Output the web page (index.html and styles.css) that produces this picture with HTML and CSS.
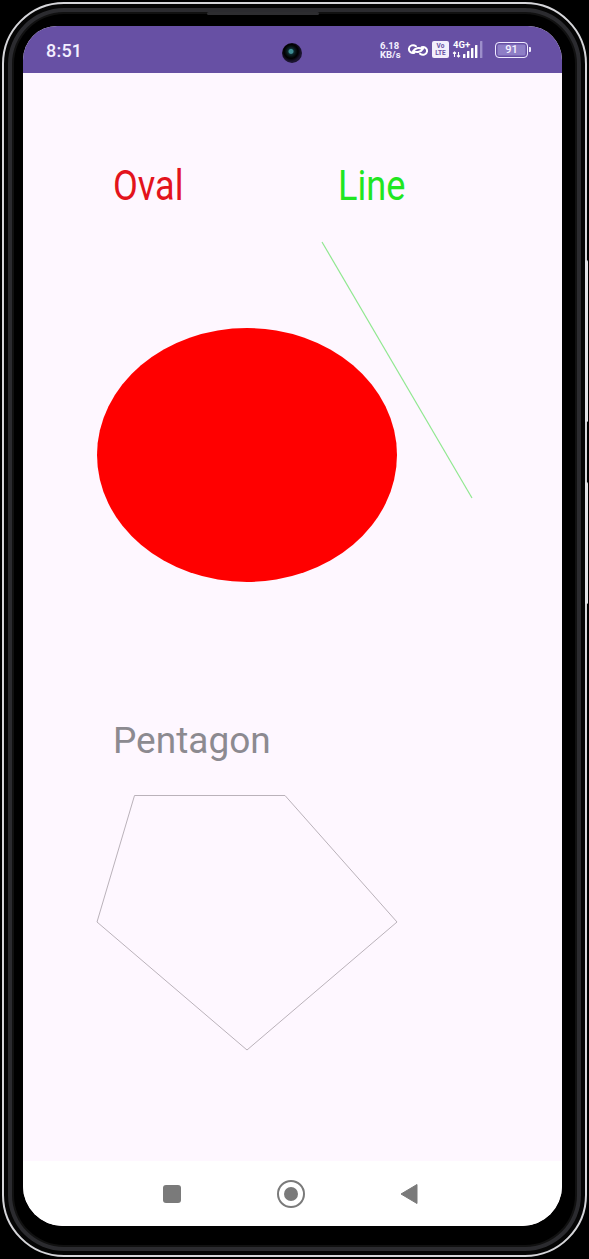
FILE: index.html
```html
<!DOCTYPE html>
<html>
<head>
<meta charset="utf-8">
<link rel="stylesheet" href="styles.css">
</head>
<body>
<div class="phone">
  <div class="bezel">
    <span class="side-btn btn-a"></span>
    <span class="side-btn btn-b"></span>
    <span class="speaker"></span>
    <div class="screen">
      <div class="status">
        <span class="time">8:51</span>
        <span class="camera"></span>
        <div class="icons">
          <div class="speed"><span>6.18</span><span>KB/s</span></div>
          <svg class="link" width="22" height="16" viewBox="0 0 22 16">
            <path d="M9 4.2 C6.5 2.3 2.4 3.2 1.9 6.6 C1.5 9.6 4.6 11.6 7.4 10.7" fill="none" stroke="#fff" stroke-width="2" stroke-linecap="round"/>
            <path d="M13 11.8 C15.5 13.7 19.6 12.8 20.1 9.4 C20.5 6.4 17.4 4.4 14.6 5.3" fill="none" stroke="#fff" stroke-width="2" stroke-linecap="round"/>
            <path d="M6 9.3 C8 6 12 5 15 7 M16 6.7 C14 10 10 11 7 9" fill="none" stroke="#fff" stroke-width="2" stroke-linecap="round"/>
          </svg>
          <div class="volte"><span>Vo</span><span>LTE</span></div>
          <svg class="signal" width="37" height="19" viewBox="0 0 37 19">
            <text x="1" y="8" class="sig-text">4G+</text>
            <path d="M2.5 17 L2.5 12 M1 13.5 L2.5 12 L4 13.5 M6.5 12 L6.5 17 M5 15.5 L6.5 17 L8 15.5" fill="none" stroke="#fff" stroke-width="1.1"/>
            <rect x="11" y="14" width="2.4" height="4" rx="0.6" fill="#fff"/>
            <rect x="15" y="11" width="2.4" height="7" rx="0.6" fill="#fff"/>
            <rect x="19" y="8" width="2.4" height="10" rx="0.6" fill="#fff"/>
            <rect x="23" y="5" width="2.4" height="13" rx="0.6" fill="#fff"/>
            <rect x="28" y="1" width="2.4" height="17" rx="0.6" fill="#9d8fcb"/>
          </svg>
          <div class="battery"><div class="batt-body">91</div><span class="batt-tip"></span></div>
        </div>
      </div>
      <main class="content">
        <div class="labels">
          <span class="label oval-label">Oval</span>
          <span class="label line-label">Line</span>
        </div>
        <svg class="canvas canvas-top" width="539" height="380" viewBox="0 0 539 380">
          <ellipse cx="224" cy="244" rx="150" ry="127" fill="#ff0000"/>
          <line x1="299" y1="31" x2="449" y2="287" stroke="#90e890" stroke-width="1.2"/>
        </svg>
        <div class="pent-label">Pentagon</div>
        <svg class="canvas canvas-bottom" width="539" height="300" viewBox="0 0 539 300">
          <polygon points="111.5,32.5 262,32.5 374,159 224,287 74,159" fill="none" stroke="#bab2ba" stroke-width="1"/>
        </svg>
      </main>
      <nav class="navbar">
        <span class="nav-square"></span>
        <span class="nav-home"><span class="nav-dot"></span></span>
        <svg class="nav-back" width="18" height="22" viewBox="0 0 18 22">
          <path d="M1 11 L17 1.5 L17 20.5 Z" fill="#7a7a7a" stroke="#7a7a7a" stroke-width="1" stroke-linejoin="round"/>
        </svg>
      </nav>
    </div>
  </div>
</div>
</body>
</html>
```
FILE: styles.css
```css
* { box-sizing: border-box; }
html, body {
  margin: 0;
  padding: 0;
  background: #000;
}
body {
  width: 589px;
  height: 1259px;
  overflow: hidden;
  font-family: Roboto, "Noto Sans", "Liberation Sans", sans-serif;
}
.phone {
  width: 589px;
  height: 1259px;
  padding: 2px;
  background: #000;
}
.bezel {
  position: relative;
  width: 585px;
  height: 1255px;
  border: 2px solid #d6d6da;
  border-radius: 62px;
  background: #000;
  padding: 22px 23px 29px 19px;
  box-shadow: inset 0 0 0 4px #050505, inset 0 0 0 8px #2b2b2f, inset 0 0 0 10px #111;
}
.side-btn {
  position: absolute;
  right: -3px;
  width: 3px;
  background: #e2e2e6;
  border-radius: 2px;
}
.btn-a { top: 256px; height: 162px; }
.btn-b { top: 478px; height: 122px; }
.speaker {
  position: absolute;
  top: 8px;
  left: 203px;
  width: 112px;
  height: 3px;
  border-radius: 2px;
  background: #2d2d30;
}
.screen {
  width: 539px;
  height: 1200px;
  border-radius: 34px 34px 40px 40px;
  overflow: hidden;
  background: #fef7ff;
  display: flex;
  flex-direction: column;
  position: relative;
}
.status {
  height: 47px;
  flex: none;
  background: #6750a4;
  display: flex;
  align-items: center;
  padding: 0 31px 0 23px;
  color: #fff;
}
.time {
  font-size: 18px;
  font-weight: 500;
  letter-spacing: 0.2px;
  color: #f3efff;
  margin-top: 1px;
}
.camera {
  position: absolute;
  left: 259px;
  top: 17px;
  width: 20px;
  height: 20px;
  border-radius: 50%;
  background: radial-gradient(circle at 45% 42%, #3d8c93 0 2px, #0d2a30 3px, #071214 5px, #000 7px, #1b1430 10px);
}
.icons {
  margin-left: auto;
  display: flex;
  align-items: center;
  height: 20px;
}
.speed {
  display: flex;
  flex-direction: column;
  font-size: 9.5px;
  font-weight: 700;
  line-height: 9px;
  color: #f4f0ff;
  width: 22px;
  margin-right: 5px;
}
.link { display: block; margin-right: 3px; }
.volte {
  width: 17px;
  height: 17px;
  background: #f2eefc;
  border-radius: 2px;
  display: flex;
  flex-direction: column;
  align-items: center;
  justify-content: center;
  font-size: 6.5px;
  font-weight: 700;
  line-height: 7px;
  color: #6750a4;
  margin-right: 3px;
}
.signal { display: block; margin-right: 6px; }
.sig-text {
  font-family: Roboto, "Liberation Sans", sans-serif;
  font-size: 9.5px;
  font-weight: 700;
  fill: #fff;
}
.battery {
  display: flex;
  align-items: center;
}
.batt-body {
  width: 33px;
  height: 16px;
  border: 1.5px solid #efeaff;
  border-radius: 4px;
  background: #8e7ec6;
  box-shadow: inset 0 0 0 1.5px #6750a4;
  color: #f6f3ff;
  font-size: 11px;
  font-weight: 500;
  line-height: 13px;
  text-align: center;
}
.batt-tip {
  width: 2px;
  height: 5px;
  background: #efeaff;
  margin-left: 1px;
  border-radius: 0 1px 1px 0;
}
.content {
  flex: 1;
  background: #fef7ff;
}
.labels {
  display: grid;
  grid-template-columns: 225px 1fr;
  padding: 88px 0 0 90px;
  height: 138px;
}
.label {
  display: block;
  font-size: 42px;
  line-height: 50px;
  transform: scaleX(0.86);
  transform-origin: left center;
}
.oval-label { color: #e3131c; }
.line-label { color: #21e621; }
.canvas { display: block; }
.pent-label {
  margin-top: 127px;
  padding-left: 90px;
  font-size: 37px;
  line-height: 45px;
  color: #8c8a90;
}
.navbar {
  height: 65px;
  flex: none;
  background: #fff;
  display: flex;
  align-items: center;
  padding-left: 140px;
  gap: 96px;
}
.nav-square {
  width: 18px;
  height: 18px;
  border-radius: 3px;
  background: #7a7a7a;
}
.nav-home {
  width: 28px;
  height: 28px;
  border: 2.5px solid #7a7a7a;
  border-radius: 50%;
  display: flex;
  align-items: center;
  justify-content: center;
  margin-right: -1px;
}
.nav-dot {
  width: 14px;
  height: 14px;
  border-radius: 50%;
  background: #7a7a7a;
}
.nav-back { display: block; }
```
